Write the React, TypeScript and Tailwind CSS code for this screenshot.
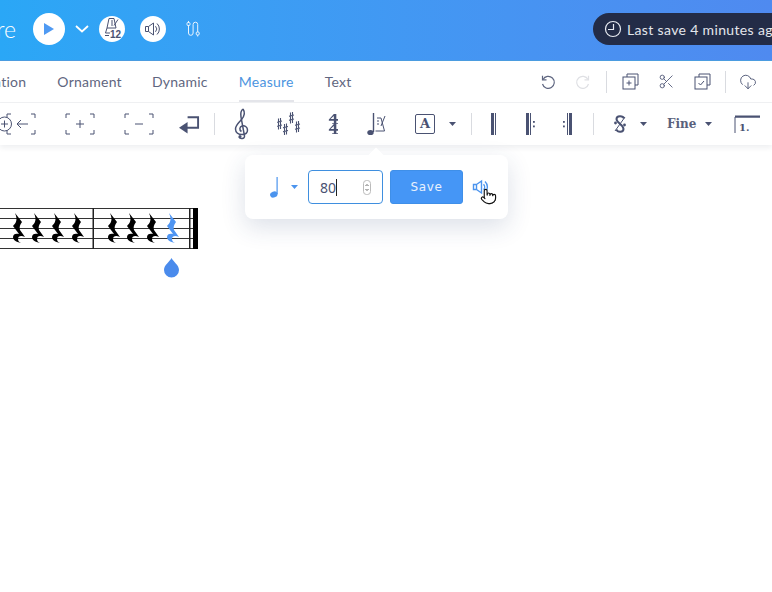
import { CloudDownload, Pointer, Scissors } from "lucide-react";
import React from "react";

const ink = "#4a5272";
const blue = "#4b94ee";

const Caret = ({ className = "" }: { className?: string }) => (
  <svg width="7" height="4" viewBox="0 0 7 4" className={className}>
    <path d="M0 0h7L3.5 4z" fill="currentColor" />
  </svg>
);

const Sep = ({ className = "" }: { className?: string }) => (
  <div className={`h-[22px] w-px shrink-0 bg-[#d9dbe0] ${className}`} />
);

const Speaker = ({ color, size = 18, weight = 1 }: { color: string; size?: number; weight?: number }) => (
  <svg width={size} height={size} viewBox="0 0 18 18" fill="none" stroke={color} strokeWidth={weight}>
    <path d="M1.5 6.5h3v5h-3zM4.5 6.5 9.5 3v12l-5-3.500" />
    <path d="M11.500 6.200a4 4 0 0 1 0 5.600M13 3.500a7.500 7.500 0 0 1 0 11" />
  </svg>
);

const Metronome = () => (
  <svg width="22" height="24" viewBox="0 0 22 24" fill="none" stroke={ink} strokeWidth="1">
    <path d="M8 1.500h5l2 9.500H6zM13 8.500l4-6M10 4h2M10 6h2M10 8h2" />
    <path d="M6 11 4.500 16H9M4 18.500h4" />
    <text x="9" y="21" fontSize="10" fontWeight="700" fill={ink} stroke="none" fontFamily="'Liberation Sans', sans-serif">
      12
    </text>
  </svg>
);

const Cable = () => (
  <svg width="14" height="18" viewBox="0 0 14 18" fill="none" stroke="#e9f4fe" strokeWidth="1">
    <path d="M2.500 5v8a2.300 2.300 0 0 0 4.600 0V4.500a2.300 2.300 0 0 1 4.600 0V12" />
    <rect x="1" y="2.500" width="3" height="3" rx="1" />
    <rect x="10.200" y="12" width="3" height="3" rx="1" />
    <path d="M2.500 1v1.500M11.700 15v1.500" />
  </svg>
);

const Clock = () => (
  <svg width="18" height="18" viewBox="0 0 18 18" fill="none" stroke="#e8ebf1" strokeWidth="1.200">
    <circle cx="9" cy="9" r="7.500" />
    <path d="M9.500 4v5.500H4" />
  </svg>
);

const Undo = ({ color, flip }: { color: string; flip?: boolean }) => (
  <svg width="16" height="16" viewBox="0 0 16 16" fill="none" stroke={color} strokeWidth="1.200" className={flip ? "-scale-x-100" : ""}>
    <path d="M3 5.500a6 6 0 1 1-.5 4.500" />
    <path d="M2.500 1.800v4h4" />
  </svg>
);

const CopyBox = ({ mark }: { mark: "plus" | "check" }) => (
  <svg width="17" height="17" viewBox="0 0 17 17" fill="none" stroke={ink} strokeWidth="1">
    <path d="M5 4V1h11v11h-3" />
    <rect x="1" y="4" width="12" height="12" />
    {mark === "plus" ? <path d="M7 7.500v5M4.500 10h5" /> : <path d="M4.500 10l2 2 3.500-4" />}
  </svg>
);

const Bracket = ({ mark }: { mark: "plus" | "minus" | "left" }) => (
  <svg width="30" height="22" viewBox="0 0 30 22" fill="none" stroke={ink} strokeWidth="1" className="overflow-visible">
    <path d="M5 1H1v4M25 1h4v4M1 17v4h4M29 17v4h-4" />
    {mark === "plus" && <path d="M15 7v8M11 11h8" />}
    {mark === "minus" && <path d="M11 11h8" />}
    {mark === "left" && (
      <>
        <path d="M22 11H11M15 7l-4 4 4 4" />
        <circle cx="-1.500" cy="11" r="7" fill="#fff" />
        <path d="M-1.500 7.500v7M-5 11h7" />
      </>
    )}
  </svg>
);

const Clef = () => (
  <svg width="15" height="32" viewBox="0 0 15 32" fill="none" stroke={ink} strokeWidth="1.500">
    <path d="M9 1c2 3 1.500 7-1.500 10.500C4.500 15 1.500 17 1.500 21c0 3.500 3 5.500 6.500 5.500 3.500 0 5.500-2 5.500-4.500 0-3-3-5-5.500-4-2.500.8-3 4-.5 5.500" />
    <path d="M9 1C7 2.500 6.500 6 7 9l3.500 19c.5 3-4.500 3.500-5.500 1" />
    <circle cx="6" cy="28.500" r="1.500" fill={ink} stroke="none" />
  </svg>
);

const Sharp = () => <path d="M1.500 0.500v11M3.500 0v11M0 4.300 5 3M0 8.300 5 7" />;

const Sharps = () => (
  <svg width="25" height="24" viewBox="0 0 25 24" fill="none" stroke={ink} strokeWidth="1.100">
    <g transform="translate(0 6)"><Sharp /></g>
    <g transform="translate(6 11.500)"><Sharp /></g>
    <g transform="translate(12 0)"><Sharp /></g>
    <g transform="translate(18 9)"><Sharp /></g>
  </svg>
);

const TimeSig = () => (
  <svg width="10" height="24" viewBox="0 0 12 24" fill={ink}>
    <path d="M7 0h3v6h2v2h-2v3h2v1H5v-1h2V8H1V6.500zM7 2.500 3 6h4z" />
    <path d="M7 12h3v6h2v2h-2v3h2v1H5v-1h2v-3H1v-1.500zM7 14.500 3 18h4z" />
  </svg>
);

const NoteMetronome = () => (
  <svg width="20" height="24" viewBox="0 0 20 24" fill="none" stroke={ink} strokeWidth="1">
    <path d="M6.500 1v19" strokeWidth="1.400" />
    <ellipse cx="3.500" cy="20.500" rx="3.200" ry="2.600" fill={ink} stroke="none" />
    <path d="M10 6h4l3.500 13H8.500M14 14l4-10M10 9h2M10 12h2" />
  </svg>
);

const BarIcon = ({ dots }: { dots?: "left" | "right" }) => (
  <svg width="12" height="22" viewBox="0 0 12 22" fill={ink}>
    {dots === "right" ? (
      <>
        <rect x="4" y="0" width="1" height="22" />
        <rect x="6" y="0" width="3" height="22" />
        <rect x="0" y="8" width="1.800" height="1.800" />
        <rect x="0" y="12.500" width="1.800" height="1.800" />
      </>
    ) : (
      <>
        <rect x={dots ? 0 : 2} y="0" width="3" height="22" />
        <rect x={dots ? 4 : 6} y="0" width="1" height="22" />
        {dots && <rect x="7" y="8" width="1.800" height="1.800" />}
        {dots && <rect x="7" y="12.500" width="1.800" height="1.800" />}
      </>
    )}
  </svg>
);

const Segno = () => (
  <svg width="12" height="20" viewBox="0 0 12 20" fill="none" stroke={ink} strokeWidth="2">
    <path d="M10 4.500C9 1.500 2.500 1.500 2.500 5c0 4 7 5.500 7 10 0 3.500-6 3.500-7 .5" />
    <path d="M1 17 11 3" strokeWidth="1" />
    <circle cx="1.500" cy="9" r="1.400" fill={ink} stroke="none" />
    <circle cx="10.500" cy="11" r="1.400" fill={ink} stroke="none" />
  </svg>
);

const Volta = () => (
  <svg width="26" height="18" viewBox="0 0 26 18" fill="none">
    <path d="M1 18V2h25" stroke={ink} strokeWidth="1" />
    <path d="M1 1.500h25" stroke={ink} strokeWidth="2" />
    <text x="5" y="16" fontSize="10" fontWeight="700" fill={ink} fontFamily="'DejaVu Serif', serif">
      1.
    </text>
  </svg>
);

const restPath =
  "M-3-15 4-6C2-3 1-1 2 2L7 9C3 7 0 8 0 11 0 13 1 14 3 15-2 14-5 12-5 9-5 6-2 5 1 6L-5-2C-2-5 0-8-3-15Z";

const Staff = () => (
  <svg width="200" height="80" viewBox="0 0 200 80" className="block">
    {[0, 10, 20, 30, 40].map((y) => (
      <rect key={y} x="0" y={y + 8} width="197" height="1" fill="#333" />
    ))}
    <rect x="92.500" y="8" width="1.500" height="41" fill="#222" />
    <rect x="189" y="8" width="1.500" height="41" fill="#222" />
    <rect x="193" y="8" width="5" height="41" fill="#000" />
    {[18, 37, 57, 77, 113, 132, 152].map((x) => (
      <path key={x} d={restPath} transform={`translate(${x} 28)`} fill="#000" />
    ))}
    <path d={restPath} transform="translate(172 28)" fill="#4f95f2" />
    <path d="M171.500 58c-2 4-7.500 7-7.500 12a7.500 7.500 0 0 0 15 0c0-5-5.500-8-7.500-12z" fill="#4a8bec" />
  </svg>
);

const Tab = ({ label, active }: { label: string; active?: boolean }) => (
  <div className="relative flex h-full items-center">
    <span className={active ? "text-[#4b94e0]" : "text-[#5f6680]"}>{label}</span>
    {active && <div className="absolute bottom-0 left-0 right-0 h-[2px] bg-[#e4e5ea]" />}
  </div>
);

export default function App() {
  return (
    <div className="relative h-[592px] w-[772px] overflow-hidden bg-white font-['Lato',sans-serif]">
      {/* header */}
      <header className="flex h-[61px] items-center border-b border-[#4b9ce0] bg-gradient-to-r from-[#2aa7f6] to-[#4f8af0] pb-[2px]">
        <span className="-ml-[40px] w-[56px] text-right text-[23px] font-light leading-none text-white">Score</span>
        <button className="ml-[17px] flex h-8 w-8 items-center justify-center rounded-full bg-white">
          <svg width="12" height="14" viewBox="0 0 12 14"><path d="M1 1l10 6-10 6z" fill="#4f9af3" /></svg>
        </button>
        <svg className="ml-[10px]" width="14" height="8" viewBox="0 0 14 8" fill="none" stroke="#fff" strokeWidth="1.800">
          <path d="M1 1l6 5.500L13 1" />
        </svg>
        <div className="ml-[10px] flex h-[26px] w-[26px] items-center justify-center rounded-full bg-white"><Metronome /></div>
        <div className="ml-[15px] flex h-[26px] w-[26px] items-center justify-center rounded-full bg-white"><Speaker color={ink} /></div>
        <div className="ml-[20px]"><Cable /></div>
        <div className="ml-auto -mr-[60px] flex h-8 w-[239px] shrink-0 items-center rounded-2xl bg-[#232c47] pl-[11px] text-[14px] text-[#e3e6ec]">
          <Clock />
          <span className="ml-[5px] whitespace-nowrap tracking-[0.35px]">Last save 4 minutes ago</span>
        </div>
      </header>

      {/* tabs */}
      <div className="flex h-[42px] items-center border-b border-[#f0f1f3] text-[14px] tracking-[0.25px]">
        <div className="flex h-full items-center gap-[31px]">
          <div className="-ml-[30px]"><Tab label="Notation" /></div>
          <Tab label="Ornament" />
          <div className="-ml-px"><Tab label="Dynamic" /></div>
          <Tab label="Measure" active />
          <Tab label="Text" />
        </div>
        <div className="ml-auto flex items-center">
          <Undo color="#5f6680" />
          <div className="ml-[19px]"><Undo color="#dfe0e4" flip /></div>
          <Sep className="ml-[15px]" />
          <div className="ml-[15px]"><CopyBox mark="plus" /></div>
          <Scissors className="ml-[19px]" size={17} stroke={ink} strokeWidth={1.200} />
          <div className="ml-[19px]"><CopyBox mark="check" /></div>
          <Sep className="ml-[14px]" />
          <CloudDownload className="ml-[13px] mr-[15px]" size={18} stroke={ink} strokeWidth={1.200} />
        </div>
      </div>

      {/* toolbar */}
      <div className="flex h-[42px] items-center shadow-[0_3px_5px_rgba(30,40,70,0.07)]">
        <div className="relative -ml-[1px] flex w-[37px] justify-end"><Bracket mark="left" /></div>
        <div className="ml-[29px]"><Bracket mark="plus" /></div>
        <div className="ml-[29px]"><Bracket mark="minus" /></div>
        <svg className="ml-[25px]" width="21" height="20" viewBox="0 0 22 20" fill="none">
          <path d="M8 14h12V3H9" stroke={ink} strokeWidth="2" />
          <path d="M0 14 9 8v12z" fill={ink} />
        </svg>
        <Sep className="ml-[14px]" />
        <div className="ml-[19px]"><Clef /></div>
        <div className="ml-[28px]"><Sharps /></div>
        <div className="ml-[26px]"><TimeSig /></div>
        <div className="ml-[29px]"><NoteMetronome /></div>
        <div className="ml-[28px] flex h-5 w-5 items-center justify-center rounded-[2px] border border-[#4a5272] font-['DejaVu_Serif',serif] text-[13px] font-bold text-[#4a5272]">A</div>
        <Caret className="ml-[14px] text-[#4a5272]" />
        <Sep className="ml-[15px]" />
        <div className="ml-[17px]"><BarIcon /></div>
        <div className="ml-[25px]"><BarIcon dots="left" /></div>
        <div className="ml-[25px]"><BarIcon dots="right" /></div>
        <Sep className="ml-[18px]" />
        <div className="ml-[20px]"><Segno /></div>
        <Caret className="ml-[14px] text-[#4a5272]" />
        <span className="ml-[20px] font-['DejaVu_Serif',serif] text-[12px] font-bold text-[#5a617c]">Fine</span>
        <Caret className="ml-[9px] text-[#4a5272]" />
        <div className="ml-[22px]"><Volta /></div>
      </div>

      {/* score */}
      <div className="mt-[55px]"><Staff /></div>

      {/* tempo popover */}
      <div className="absolute left-[245px] top-[155px] flex h-16 w-[263px] items-center rounded-lg bg-white shadow-[0_8px_24px_rgba(40,60,110,0.16)]">
        <div className="absolute -top-[5px] left-[125px] h-3 w-3 rotate-45 bg-white" />
        <svg className="ml-[24px]" width="10" height="21" viewBox="0 0 10 21">
          <path d="M7.500 0h1.200v17h-1.200z" fill={blue} />
          <ellipse cx="4.800" cy="17.500" rx="3.800" ry="3" fill={blue} transform="rotate(-20 4.800 17.500)" />
        </svg>
        <Caret className="ml-[12px] text-[#4b94ee]" />
        <div className="ml-[10px] flex h-[34px] w-[75px] items-center rounded border border-[#3f8fdf] pl-[11px] pr-[11px] font-['Noto_Sans',sans-serif] text-[14px] text-[#4a5272]">
          <span>80</span>
          <span className="h-[17px] w-px bg-[#222]" />
          <svg className="ml-auto" width="8" height="15" viewBox="0 0 8 15" fill="none" stroke="#666" strokeWidth="1">
            <rect x="0.500" y="0.500" width="7" height="14" rx="3" stroke="#bbb" />
            <path d="M2.500 6 4 4.500 5.500 6M2.500 9 4 10.500 5.500 9" />
          </svg>
        </div>
        <button className="ml-[7px] h-[34px] w-[73px] rounded-[3px] border border-[#3f8fe8] bg-[#4596f6] font-['DejaVu_Sans',sans-serif] text-[12px] tracking-[0.6px] text-[#e8f1fd]">Save</button>
        <div className="ml-[9px]"><Speaker color={blue} weight={1.400} /></div>
        <Pointer className="absolute left-[235px] top-[33px]" size={17} fill="#fff" stroke="#111" strokeWidth={1.600} />
      </div>
    </div>
  );
}
